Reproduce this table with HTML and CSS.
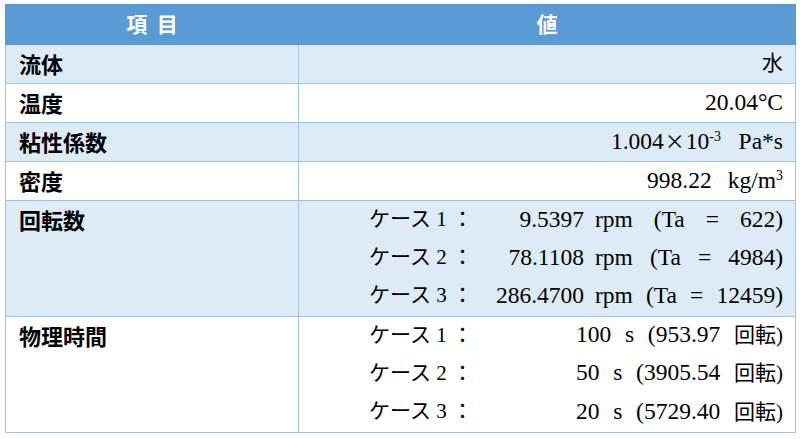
FILE: index.html
```html
<!DOCTYPE html>
<html lang="ja">
<head>
<meta charset="utf-8">
<link rel="stylesheet" href="styles.css">
</head>
<body>
<table class="spec">
  <colgroup><col class="c1"><col class="c2"></colgroup>
  <thead>
    <tr><th>項&nbsp;&nbsp;目</th><th>値</th></tr>
  </thead>
  <tbody>
    <tr class="alt"><td class="key">流体</td><td class="val"><span class="jp">水</span></td></tr>
    <tr><td class="key">温度</td><td class="val">20.04°C</td></tr>
    <tr class="alt"><td class="key">粘性係数</td><td class="val">1.004<span class="times">×</span>10<sup>-3</sup>&nbsp;&nbsp; Pa*s</td></tr>
    <tr><td class="key">密度</td><td class="val">998.22<span class="gap"></span>kg/m<sup>3</sup></td></tr>
    <tr class="alt multi">
      <td class="key">回転数</td>
      <td class="val">
        <div class="case"><span class="lbl">ケース 1 ：</span><span class="num">9.5397</span><span class="rest">rpm (Ta = 622)</span></div>
        <div class="case"><span class="lbl">ケース 2 ：</span><span class="num">78.1108</span><span class="rest">rpm (Ta = 4984)</span></div>
        <div class="case"><span class="lbl">ケース 3 ：</span><span class="num">286.4700</span><span class="rest">rpm (Ta = 12459)</span></div>
      </td>
    </tr>
    <tr class="multi">
      <td class="key">物理時間</td>
      <td class="val">
        <div class="case time"><span class="lbl">ケース 1 ：</span><span class="rest">100 s (953.97 <span class="jp">回転)</span></span></div>
        <div class="case time"><span class="lbl">ケース 2 ：</span><span class="rest">50 s (3905.54 <span class="jp">回転)</span></span></div>
        <div class="case time"><span class="lbl">ケース 3 ：</span><span class="rest">20 s (5729.40 <span class="jp">回転)</span></span></div>
      </td>
    </tr>
  </tbody>
</table>
</body>
</html>
```
FILE: styles.css
```css
html, body {
  margin: 0;
  padding: 0;
  background: #ffffff;
}
body {
  padding: 4px 5px 0 5px;
  font-family: "Liberation Serif", "Noto Sans CJK JP", serif;
  color: #000;
}
.spec {
  width: 790px;
  border-collapse: collapse;
  table-layout: fixed;
  font-size: 23.5px;
}
.c1 { width: 293px; }
.c2 { width: 497px; }
.spec th {
  background: #5b9bd5;
  color: #ffffff;
  font-family: "Noto Sans CJK JP", sans-serif;
  font-weight: bold;
  font-size: 21px;
  height: 36px;
  padding: 0 0 3px 0;
  line-height: 32px;
  border: 1px solid #5b9bd5;
  text-align: center;
}
.spec td {
  border: 1px solid #9dc3e6;
  padding: 0 12px 3px 13px;
  line-height: 30px;
  height: 35px;
  vertical-align: middle;
}
.spec tr.alt td { background: #ddebf7; }
.key {
  font-family: "Noto Sans CJK JP", sans-serif;
  font-weight: bold;
  font-size: 22px;
  text-align: left;
}
.val {
  text-align: right;
  white-space: nowrap;
}
.val sup {
  font-size: 14px;
  line-height: 0;
  vertical-align: 8px;
}
.times {
  font-family: "Noto Sans CJK JP", sans-serif;
  font-size: 20px;
  padding: 0 1px;
}
.gap {
  display: inline-block;
  width: 16px;
}
.spec tr.multi td {
  vertical-align: top;
  height: 112px;
  padding-top: 0;
  padding-bottom: 0;
}
.spec tr.multi td.key {
  padding-top: 3px;
}
.case {
  display: grid;
  grid-template-columns: 1fr auto 188px;
  align-items: center;
  box-sizing: border-box;
  height: 38.33px;
  padding-bottom: 3px;
  line-height: 30px;
}
.case.time {
  grid-template-columns: 1fr 207px;
}
.lbl {
  padding-left: 57px;
  text-align: left;
  font-family: "Liberation Serif", "Noto Sans CJK JP", serif;
  font-size: 21px;
}
.num {
  text-align: right;
  padding-right: 11px;
}
.rest {
  white-space: normal;
  text-align: justify;
  text-align-last: justify;
}
.jp {
  display: inline-block;
  font-size: 21px;
}
```
